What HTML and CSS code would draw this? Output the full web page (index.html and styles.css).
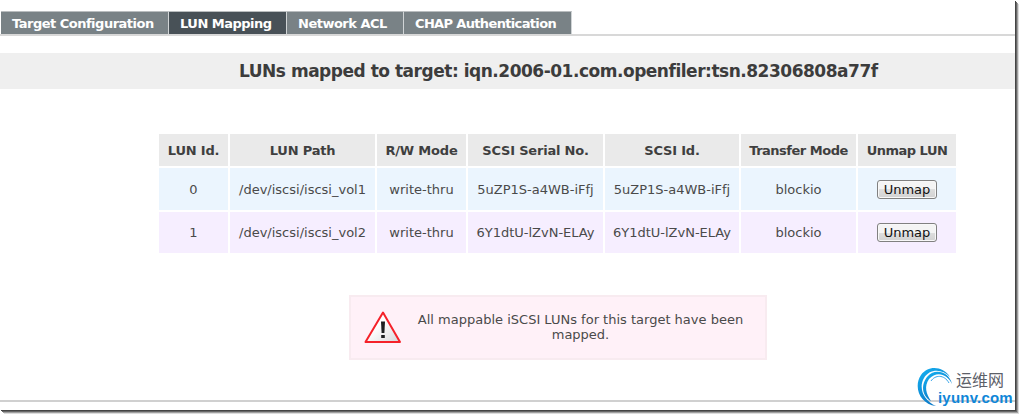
FILE: index.html
```html
<!DOCTYPE html>
<html lang="en">
<head>
  <meta charset="UTF-8">
  <title>Openfiler | LUN Mapping</title>
  <link rel="stylesheet" href="styles.css">
</head>
<body>
  <div class="page">
    <ul class="tabs">
      <li class="tab tab-target">Target Configuration</li>
      <li class="tab tab-lun active">LUN Mapping</li>
      <li class="tab tab-acl">Network ACL</li>
      <li class="tab tab-chap">CHAP Authentication</li>
    </ul>

    <h2 class="title">LUNs mapped to target: iqn.2006-01.com.openfiler:tsn.82306808a77f</h2>

    <table class="luns">
      <colgroup>
        <col class="col-id"><col class="col-path"><col class="col-mode"><col class="col-serial">
        <col class="col-scsi"><col class="col-transfer"><col class="col-unmap">
      </colgroup>
      <tr class="head">
        <th>LUN Id.</th><th>LUN Path</th><th>R/W Mode</th><th>SCSI Serial No.</th>
        <th>SCSI Id.</th><th class="tight">Transfer Mode</th><th class="tight">Unmap LUN</th>
      </tr>
      <tr class="odd">
        <td>0</td><td>/dev/iscsi/iscsi_vol1</td><td>write-thru</td><td>5uZP1S-a4WB-iFfj</td>
        <td>5uZP1S-a4WB-iFfj</td><td>blockio</td><td><button class="unmap">Unmap</button></td>
      </tr>
      <tr class="even">
        <td>1</td><td>/dev/iscsi/iscsi_vol2</td><td>write-thru</td><td>6Y1dtU-lZvN-ELAy</td>
        <td>6Y1dtU-lZvN-ELAy</td><td>blockio</td><td><button class="unmap">Unmap</button></td>
      </tr>
    </table>

    <div class="notice">
      <svg class="warning" width="38" height="33" viewBox="0 0 38 33">
        <defs>
          <linearGradient id="sheet" x1="0" y1="0" x2="1" y2="1">
            <stop offset="0.4" stop-color="#fff"/>
            <stop offset="1" stop-color="#d4d8da"/>
          </linearGradient>
        </defs>
        <path d="M19 1.5 L36 31 H1.5 Z" fill="url(#sheet)" stroke="#f5222a" stroke-width="2" stroke-linejoin="round"/>
        <path d="M17 10.5 H21 L20.4 22 H17.6 Z" fill="#1c2022"/>
        <rect x="17.2" y="24" width="3.6" height="3" fill="#1c2022"/>
      </svg>
      <p>All mappable iSCSI LUNs for this target have been mapped.</p>
    </div>

    <hr class="rule">

    <!-- Site badge over the bottom right corner -->
    <div class="badge">
      <svg class="swirl" width="38" height="40" viewBox="0 0 38 40">
        <defs>
          <linearGradient id="blue" x1="0" y1="0" x2="0.6" y2="1">
            <stop offset="0" stop-color="#16b2f2"/>
            <stop offset="1" stop-color="#0a74c4"/>
          </linearGradient>
        </defs>
        <path d="M34 10 C27 -1 12 -2 5 8 C-3 20 4 37 20 39 C8 34 2 21 8 11 C13 2 26 1 34 10 Z" fill="url(#blue)"/>
        <path d="M36 17 C33 4 18 1 11 10 C4 19 7 30 15 34 C10 27 8 19 13 12 C20 4 31 6 36 17 Z" fill="url(#blue)"/>
        <path d="M33 16 C28 7 19 8 15 14" fill="none" stroke="#3aa6ea" stroke-width="1"/>
      </svg>
      <span class="badge-name">运维网</span>
      <span class="badge-site">iyunv.com</span>
    </div>
  </div>
</body>
</html>
```
FILE: styles.css
```css
html,
body {
  height: 414px;
}
body {
  margin: 0;
  background: #fff;
  color: #4a4a4a;
  font-family: "DejaVu Sans", Verdana, sans-serif;
  font-size: 13px;
}
/* Page frame with the dark drop shadow on the right and bottom */
.page {
  position: relative;
  box-sizing: border-box;
  width: 1015px;
  height: 410px;
  padding-top: 11px;
  background: #fff;
  box-shadow: 1px 1px 0 #444, 2px 2px 0 #686868, 3px 3px 0 #a0a0a0, 4px 4px 0 #dcdcdc;
}
/* Tabs */
.tabs {
  display: flex;
  height: 23px;
  margin: 0;
  padding: 0 0 0 1px;
  list-style: none;
  border-bottom: 2px solid #d8d8d8;
}
.tab {
  box-sizing: border-box;
  height: 23px;
  padding-left: 11px;
  border-right: 1px solid #d0d4d6;
  border-top: 1px solid #b9bdbf;
  background: #798286;
  color: #fff;
  font-weight: bold;
  line-height: 23px;
  letter-spacing: -0.5px;
  white-space: nowrap;
}
.tab.active {
  background: #485157;
}
.tab-target {
  width: 168px;
}
.tab-lun {
  width: 118px;
}
.tab-acl {
  width: 117px;
}
.tab-chap {
  width: 168px;
  letter-spacing: -0.65px;
}
/* Heading band */
.title {
  height: 36px;
  margin: 17px 0 43px;
  padding-left: 239px;
  background: #efefef;
  color: #3c3c3c;
  font-size: 17px;
  line-height: 36px;
  letter-spacing: -0.48px;
  white-space: nowrap;
}
/* LUN table */
.luns {
  width: 801px;
  margin-left: 157px;
  table-layout: fixed;
  border-collapse: separate;
  border-spacing: 2px;
}
.luns th,
.luns td {
  padding: 0;
  text-align: center;
  white-space: nowrap;
}
.luns th {
  height: 32px;
  background: #eaeaea;
  color: #3f3f3f;
  letter-spacing: -0.2px;
}
.luns th.tight {
  letter-spacing: -0.5px;
}
.luns td {
  height: 42px;
}
.luns .even td {
  height: 41px;
}
.odd td {
  background: #ebf5fe;
}
.even td {
  background: #f6eeff;
}
.col-id {
  width: 69px;
}
.col-path {
  width: 145px;
}
.col-mode {
  width: 89px;
}
.col-serial {
  width: 135px;
}
.col-scsi {
  width: 134px;
}
.col-transfer {
  width: 115px;
}
.col-unmap {
  width: 98px;
}
.unmap {
  width: 60px;
  height: 19px;
  padding: 0;
  border: 1px solid #808080;
  border-radius: 3px;
  background: linear-gradient(#f4f4f4 50%, #dedede 50%, #d2d2d2);
  box-shadow: inset 0 0 0 1px #f8f8f8;
  color: #111;
  font: 13px "DejaVu Sans", Verdana, sans-serif;
  line-height: 17px;
}
/* Warning box */
.notice {
  display: flex;
  box-sizing: border-box;
  width: 418px;
  height: 65px;
  margin: 40px 0 0 349px;
  padding: 14px 20px 0 13px;
  border: 2px solid #f8ebf0;
  background: #fff1f8;
}
.warning {
  flex: none;
}
.notice p {
  width: 332px;
  margin: 1px 0 0 14px;
  line-height: 15px;
  text-align: center;
}
.rule {
  height: 2px;
  margin: 40px 0 0;
  border: 0;
  background: #d0d0d0;
}
/* Badge */
.badge {
  position: absolute;
  left: 916px;
  top: 367px;
  width: 100px;
  height: 41px;
}
.swirl {
  position: absolute;
  left: 0;
  top: 0;
}
.badge-name {
  position: absolute;
  left: 40px;
  top: 3px;
  color: #5c6068;
  font: 16px/18px "Noto Sans CJK SC", sans-serif;
  white-space: nowrap;
}
.badge-site {
  position: absolute;
  left: 22px;
  top: 22px;
  color: #0f86d8;
  font: bold 15px/18px "Liberation Sans", Arial, sans-serif;
  letter-spacing: 0.2px;
  white-space: nowrap;
}
```
